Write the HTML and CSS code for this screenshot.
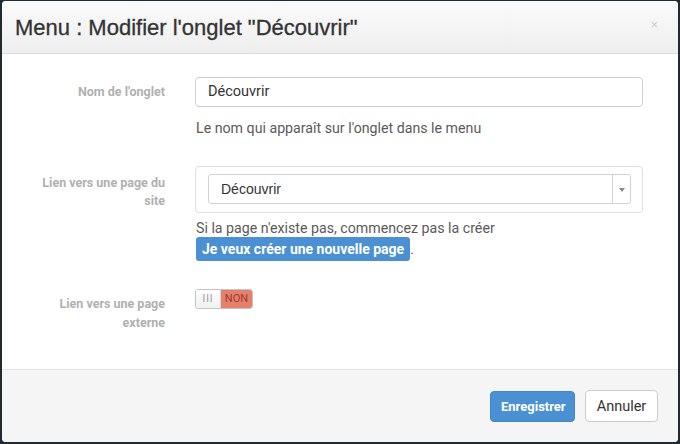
FILE: index.html
```html
<!DOCTYPE html>
<html lang="fr">
<head>
    <meta charset="UTF-8">
    <title>Menu : Modifier l'onglet</title>
    <link rel="stylesheet" href="styles.css">
</head>
<body>
    <div class="modal">
        <header class="modal-header">
            <h3>Menu : Modifier l'onglet "Découvrir"</h3>
            <span class="close">×</span>
        </header>

        <div class="modal-body">
            <div class="form-row">
                <label class="form-label">Nom de l'onglet</label>
                <div class="field">
                    <div class="input">Découvrir</div>
                    <p class="help help-first">Le nom qui apparaît sur l'onglet dans le menu</p>
                </div>
            </div>

            <div class="form-row">
                <label class="form-label label-box">Lien vers une page du site</label>
                <div class="field">
                    <div class="select-box">
                        <div class="select">
                            <span class="select-value">Découvrir</span>
                            <span class="select-arrow"></span>
                        </div>
                    </div>
                    <p class="help">Si la page n'existe pas, commencez pas la créer</p>
                    <p class="help help-link"><span class="badge-link">Je veux créer une nouvelle page</span>.</p>
                </div>
            </div>

            <div class="form-row">
                <label class="form-label label-toggle">Lien vers une page externe</label>
                <div class="field">
                    <div class="toggle">
                        <span class="toggle-handle">III</span>
                        <span class="toggle-off">NON</span>
                    </div>
                </div>
            </div>
        </div>

        <footer class="modal-footer">
            <button class="btn btn-primary">Enregistrer</button>
            <button class="btn btn-default">Annuler</button>
        </footer>
    </div>
</body>
</html>
```

FILE: styles.css
```css
:root {
    --blue: #4a90d2;
    --label-color: #b0b0b0;
    --text-color: #5a5a5a;
}

* {
    box-sizing: border-box;
    margin: 0;
    padding: 0;
}

body {
    background-color: #1f2b31;
    font-family: Roboto, "Liberation Sans", sans-serif;
    color: #333;
    padding: 1px 2px 2px 2px;
}

.modal {
    height: 441px;
    background-color: #fff;
    border-radius: 4px;
    display: flex;
    flex-direction: column;
    overflow: hidden;
}

/* Header */
.modal-header {
    height: 53px;
    display: flex;
    align-items: center;
    justify-content: space-between;
    padding: 0 20px 0 13px;
    background: linear-gradient(#fbfbfb, #eeeeee);
    border-bottom: 1px solid #dcdcdc;
}

.modal-header h3 {
    font-family: "Liberation Sans", Arial, sans-serif;
    font-size: 22px;
    font-weight: normal;
    color: #333;
    padding-top: 2px;
    -webkit-text-stroke: 0.3px #333;
}

.close {
    font-family: "Liberation Sans", Arial, sans-serif;
    font-size: 13px;
    color: #c8c8c8;
    margin-top: -5px;
}

/* Body */
.modal-body {
    flex: 1;
    padding-top: 23px;
}

.form-row {
    display: grid;
    grid-template-columns: 163px 448px;
    column-gap: 30px;
    margin-bottom: 29px;
}

.form-label {
    padding-left: 30px;
    padding-top: 6px;
    text-align: right;
    font-size: 12.5px;
    font-weight: bold;
    line-height: 18px;
    color: var(--label-color);
}

.label-box {
    padding-top: 8px;
}

.label-toggle {
    padding-top: 4px;
    line-height: 19px;
}

.input {
    height: 30px;
    border: 1px solid #cfcfcf;
    border-radius: 4px;
    padding: 0 12px;
    font-size: 14.5px;
    line-height: 28px;
    color: #333;
}

.help {
    font-size: 14.2px;
    line-height: 18px;
    color: var(--text-color);
    padding-left: 1px;
}

.help-first {
    margin-top: 12px;
}

.select-box {
    border: 1px solid #dedede;
    border-radius: 4px;
    padding: 7px 11px 8px 12px;
    margin-bottom: 6px;
}

.select {
    height: 30px;
    border: 1px solid #d2d2d2;
    border-radius: 3px;
    display: flex;
    align-items: center;
}

.select-value {
    flex: 1;
    padding-left: 12px;
    font-family: "Liberation Sans", Arial, sans-serif;
    font-size: 14px;
    color: #333;
}

.select-arrow {
    width: 18px;
    height: 100%;
    border-left: 1px solid #d2d2d2;
    position: relative;
}

.select-arrow::after {
    content: "";
    position: absolute;
    left: 6px;
    top: 13px;
    border-left: 3px solid transparent;
    border-right: 3px solid transparent;
    border-top: 4px solid #888;
}

.help-link {
    line-height: 24px;
}

.badge-link {
    display: inline-block;
    background-color: var(--blue);
    color: #fff;
    font-weight: bold;
    font-size: 14px;
    line-height: 24px;
    padding: 0 6px;
    border-radius: 3px;
}

.toggle {
    display: inline-flex;
    height: 20px;
    border: 1px solid #c4c4c4;
    border-radius: 3px;
    overflow: hidden;
    font-size: 11px;
    line-height: 18px;
    margin-top: -1px;
    vertical-align: top;
}

.toggle-handle {
    width: 25px;
    text-align: center;
    color: #999;
    background: linear-gradient(#ffffff, #f0f0f0);
    border-right: 1px solid #d8d8d8;
    letter-spacing: 1px;
    font-size: 10px;
}

.toggle-off {
    width: 31px;
    text-align: center;
    background-color: #e5806d;
    color: #9b3a2c;
}

/* Footer */
.modal-footer {
    height: 73px;
    border-top: 1px solid #e5e5e5;
    background-color: #f5f5f5;
    display: flex;
    justify-content: flex-end;
    align-items: flex-start;
    gap: 10px;
    padding: 20px 20px 0 0;
}

.btn {
    height: 32px;
    border-radius: 4px;
    font-family: Roboto, "Liberation Sans", sans-serif;
    font-size: 13px;
    padding: 0 10px;
    cursor: pointer;
}

.btn-primary {
    margin-top: 1px;
    height: 31px;
    background-color: var(--blue);
    border: 1px solid #4287c9;
    color: #fff;
    font-weight: bold;
    width: 85px;
}

.btn-default {
    background-color: #fff;
    border: 1px solid #cccccc;
    color: #333;
    font-size: 14.5px;
    width: 73px;
}
```
